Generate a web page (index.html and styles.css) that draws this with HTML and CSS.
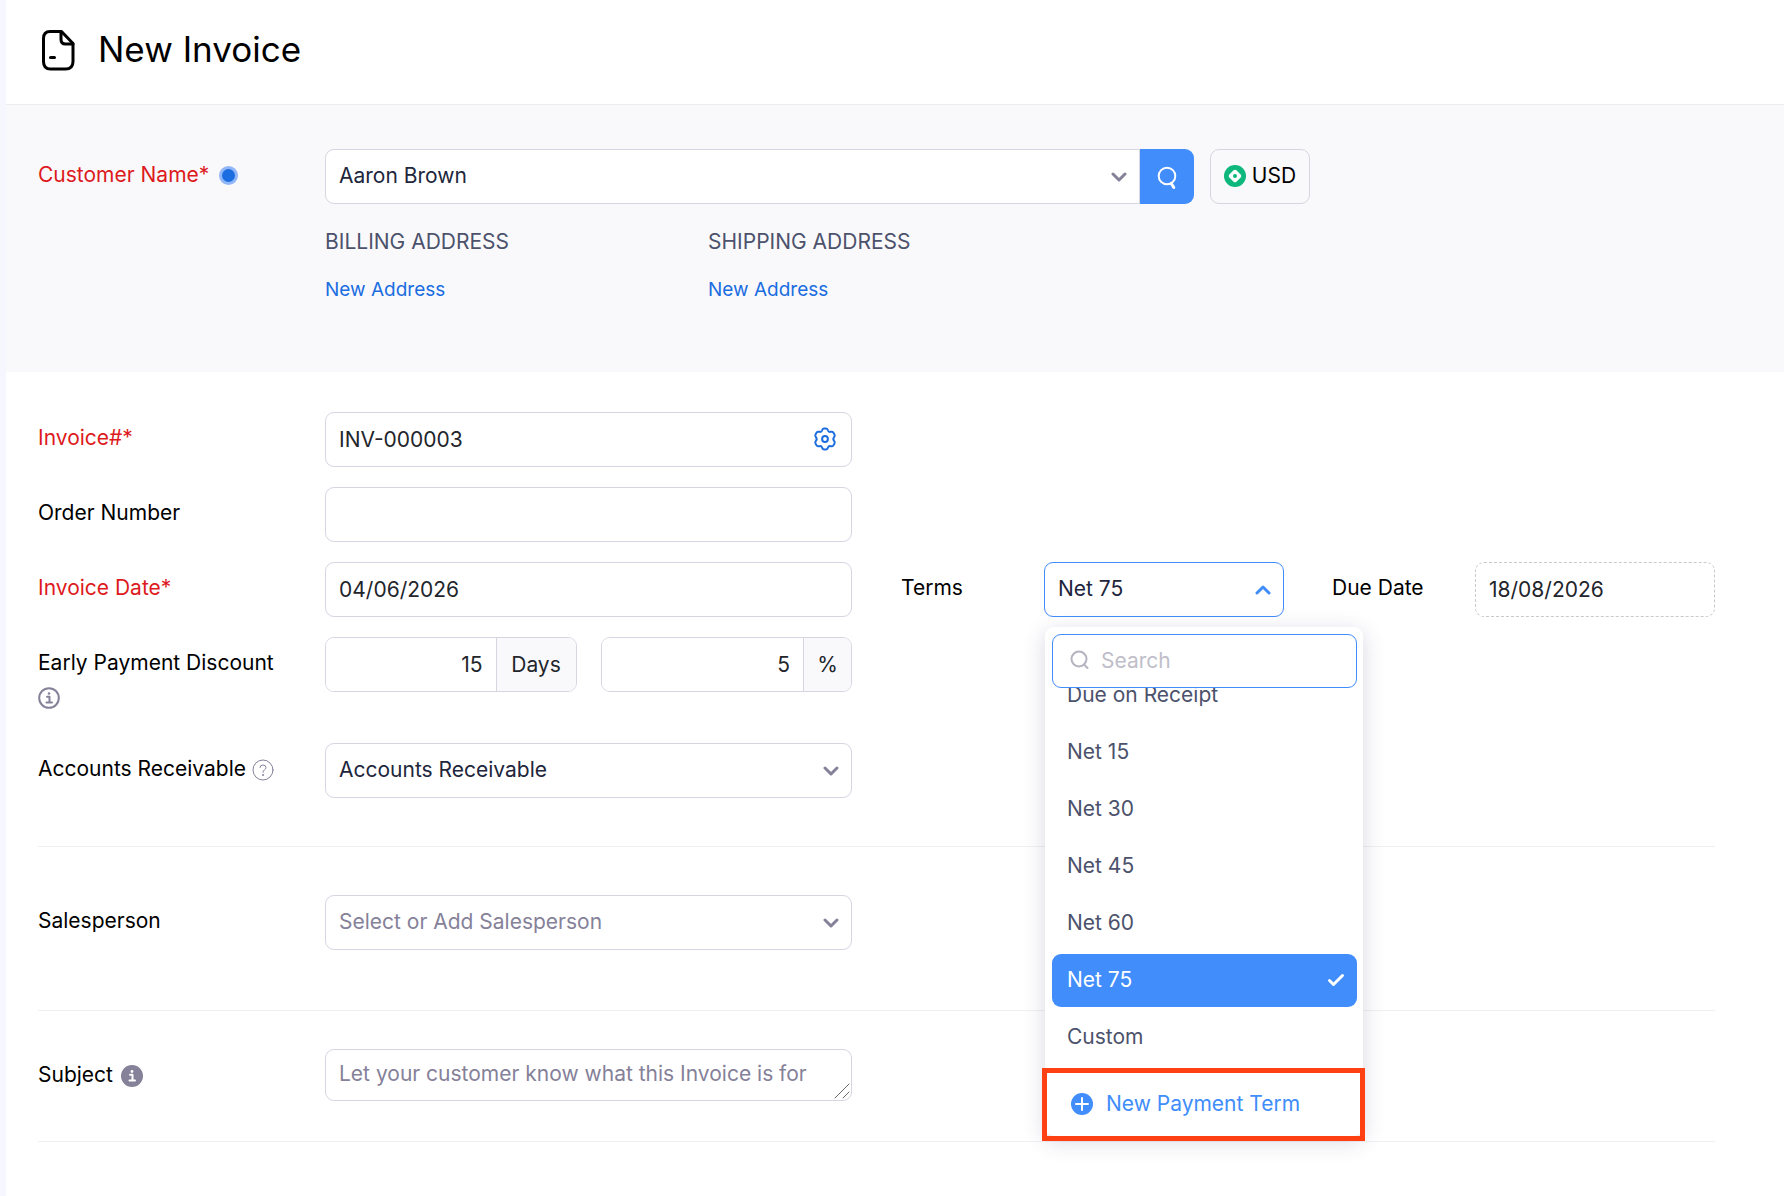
FILE: index.html
```
<!DOCTYPE html>
<html lang="en">
<head>
  <meta charset="utf-8">
  <meta name="viewport" content="width=device-width, initial-scale=1">
  <title>New Invoice</title>
  <link rel="stylesheet" href="styles.css">
</head>
<body>
  <header class="page-header">
    <svg class="header-icon" viewBox="0 0 34 42" aria-hidden="true">
      <path d="M9 2.500h11.500L32 14.500V32.500q0 7.500-7.500 7.500H9.500Q2.500 40 2.500 32.500V9.500Q2.500 2.500 9 2.500z"/>
      <path d="M20 3v7.500q0 4.500 4.500 4.500H32"/>
      <path d="M9.500 28.500h4"/>
    </svg>
    <h1>New Invoice</h1>
  </header>

  <form class="invoice-form">
    <!-- Customer -->
    <section class="customer-section">
      <div class="form-row">
        <label class="field-label required" for="customer">Customer Name* <span class="status-dot"></span></label>
        <div class="customer-fields">
          <div class="input-group">
            <div class="select-wrap">
              <select id="customer">
                <option>Aaron Brown</option>
              </select>
              <svg class="chevron" viewBox="0 0 16 10" aria-hidden="true"><path d="M2 2l6 6 6-6"/></svg>
            </div>
            <button type="button" class="search-button" aria-label="Search customer">
              <svg viewBox="0 0 24 26" aria-hidden="true">
                <circle cx="12" cy="12" r="8.300"/>
                <path class="handle" d="M16.300 19.500l2.500 4"/>
              </svg>
            </button>
          </div>
          <button type="button" class="currency-button">
            <svg viewBox="0 0 22 22" aria-hidden="true">
              <circle cx="11" cy="11" r="11" fill="#0eb77c"/>
              <rect x="6" y="6" width="10" height="10" rx="2" fill="#fff" transform="rotate(45 11 11)"/>
              <circle cx="11" cy="11" r="2" fill="#0eb77c"/>
            </svg>
            USD
          </button>
        </div>
      </div>
      <div class="addresses">
        <div>
          <h2>BILLING ADDRESS</h2>
          <a href="#">New Address</a>
        </div>
        <div>
          <h2>SHIPPING ADDRESS</h2>
          <a href="#">New Address</a>
        </div>
      </div>
    </section>

    <!-- Invoice details -->
    <section class="details">
      <div class="form-row">
        <label class="field-label required" for="invoice-no">Invoice#*</label>
        <div class="input-icon">
          <input type="text" id="invoice-no" value="INV-000003">
          <button type="button" class="gear-button" aria-label="Invoice number settings">
            <svg viewBox="0 0 24 24" aria-hidden="true">
              <path d="M9 3.500Q9.500 1.600 11 1.600h2Q14.500 1.600 15 3.500Q15.600 5.300 17.500 4.800Q19.500 4.300 20.300 5.500L21.500 7.500Q22.200 9 21 10.300Q19.600 12 21 13.700Q22.200 15 21.500 16.500L20.300 18.500Q19.500 19.700 17.500 19.200Q15.600 18.700 15 20.500Q14.500 22.400 13 22.400H11Q9.500 22.400 9 20.500Q8.400 18.700 6.500 19.200Q4.500 19.700 3.700 18.500L2.500 16.500Q1.800 15 3 13.700Q4.400 12 3 10.300Q1.800 9 2.500 7.500L3.700 5.500Q4.500 4.300 6.500 4.800Q8.400 5.300 9 3.500z"/>
              <circle cx="12" cy="12" r="2.900"/>
            </svg>
          </button>
        </div>
      </div>

      <div class="form-row">
        <label class="field-label" for="order-no">Order Number</label>
        <input type="text" id="order-no">
      </div>

      <div class="form-row">
        <label class="field-label required" for="invoice-date">Invoice Date*</label>
        <input type="text" id="invoice-date" value="04/06/2026">
        <label class="field-label terms-label" for="terms">Terms</label>
        <div class="select-wrap terms">
          <select id="terms" class="is-open">
            <option>Net 75</option>
          </select>
          <svg class="chevron open" viewBox="0 0 16 10" aria-hidden="true"><path d="M2 8l6-6 6 6"/></svg>

          <div class="terms-menu">
            <div class="menu-search">
              <svg viewBox="0 0 20 20" aria-hidden="true"><circle cx="9" cy="9" r="7.500"/><path d="M14 14.500l3.500 3.500"/></svg>
              <input type="text" placeholder="Search" aria-label="Search terms">
            </div>
            <ul class="menu-list">
              <li><button type="button">Due on Receipt</button></li>
              <li><button type="button">Net 15</button></li>
              <li><button type="button">Net 30</button></li>
              <li><button type="button">Net 45</button></li>
              <li><button type="button">Net 60</button></li>
              <li>
                <button type="button" class="selected">Net 75
                  <svg viewBox="0 0 18 14" aria-hidden="true"><path d="M2.500 7.500l4 4L15.500 2.500"/></svg>
                </button>
              </li>
              <li><button type="button">Custom</button></li>
            </ul>
            <div class="menu-footer">
              <button type="button">
                <svg viewBox="0 0 22 22" aria-hidden="true"><circle cx="11" cy="11" r="11"/><path d="M11 5v12M5 11h12"/></svg>
                New Payment Term
              </button>
            </div>
          </div>
        </div>
        <label class="field-label due-label" for="due-date">Due Date</label>
        <input type="text" id="due-date" class="due-date" value="18/08/2026" readonly>
      </div>

      <div class="form-row">
        <label class="field-label" for="discount-days">Early Payment Discount
          <svg class="hint-icon" viewBox="0 0 22 22" aria-hidden="true">
            <circle cx="11" cy="11" r="9.800"/>
            <path class="glyph" d="M9 9.700h2.500v5.500M8.500 15.500h5.500"/>
            <circle class="dot" cx="11" cy="6.500" r="1.300"/>
          </svg>
        </label>
        <div class="discount">
          <div class="addon-group">
            <input type="text" id="discount-days" value="15">
            <span class="addon">Days</span>
          </div>
          <div class="addon-group percent">
            <input type="text" value="5" aria-label="Discount percent">
            <span class="addon">%</span>
          </div>
        </div>
      </div>

      <div class="form-row">
        <label class="field-label" for="receivable">Accounts Receivable
          <svg class="hint-icon thin" viewBox="0 0 22 22" aria-hidden="true">
            <circle cx="11" cy="11" r="10"/>
            <path d="M8 8.500Q8 6 11 6t3 2.500Q14 10 12.300 11Q11 11.800 11 13.300"/>
            <circle class="dot" cx="11" cy="16" r="1"/>
          </svg>
        </label>
        <div class="select-wrap">
          <select id="receivable">
            <option>Accounts Receivable</option>
          </select>
          <svg class="chevron" viewBox="0 0 16 10" aria-hidden="true"><path d="M2 2l6 6 6-6"/></svg>
        </div>
      </div>
    </section>

    <section class="salesperson">
      <div class="form-row">
        <label class="field-label" for="salesperson">Salesperson</label>
        <div class="select-wrap">
          <select id="salesperson" class="empty">
            <option>Select or Add Salesperson</option>
          </select>
          <svg class="chevron" viewBox="0 0 16 10" aria-hidden="true"><path d="M2 2l6 6 6-6"/></svg>
        </div>
      </div>
    </section>

    <section class="subject">
      <div class="form-row">
        <label class="field-label" for="subject">Subject
          <svg class="hint-icon filled" viewBox="0 0 22 22" aria-hidden="true">
            <circle cx="11" cy="11" r="11"/>
            <path class="glyph" d="M9 9.700h2.500v5.500M8.500 15.500h5.500"/>
            <circle class="dot" cx="11" cy="6.500" r="1.400"/>
          </svg>
        </label>
        <div class="textarea-wrap">
          <textarea id="subject" rows="1" placeholder="Let your customer know what this Invoice is for"></textarea>
          <svg class="resize-grip" viewBox="0 0 16 16" aria-hidden="true"><path d="M1 15L15 1M9 15l6-6"/></svg>
        </div>
      </div>
    </section>
  </form>
</body>
</html>
```
FILE: styles.css
```
:root {
  --blue: #408dfb;
  --link: #1b6de0;
  --red: #dd1a20;
  --text: #21263c;
  --muted: #4c526c;
  --gray: #858199;
  --border: #d7d5e2;
  --line: #f0f0f3;
  --light-bg: #f9f9fb;
}

* {
  box-sizing: border-box;
}

body {
  margin: 0;
  border-left: 6px solid #f6f6fe;
  background-color: #fff;
  color: #000;
  font-family: Inter, "Liberation Sans", sans-serif;
  font-size: 21px;
  min-height: 100vh;
}

button, input, select, textarea {
  font: inherit;
  color: inherit;
}

button {
  border: none;
  background: none;
  padding: 0;
  cursor: pointer;
}

svg {
  flex: none;
  fill: none;
  stroke-linecap: round;
  stroke-linejoin: round;
}

/* Header */
.page-header {
  display: flex;
  align-items: center;
  gap: 23px;
  height: 105px;
  padding: 0 35px 4px;
  border-bottom: 1px solid #ededf0;
}

.page-header h1 {
  margin: 0;
  padding-bottom: 2px;
  font-size: 35px;
  font-weight: 400;
  line-height: 44px;
}

.header-icon {
  width: 34px;
  height: 42px;
  stroke: #000;
  stroke-width: 3;
}

/* Rows */
.form-row {
  display: grid;
  grid-template-columns: 287px minmax(0, 527fr) 49px 143px minmax(0, 240fr) 48px 143px minmax(0, 240fr);
  align-items: start;
}

.field-label {
  padding: 9px 30px 9px 0;
  line-height: 34px;
}

.required {
  color: var(--red);
}

.terms-label {
  grid-column: 4;
}

.due-label {
  grid-column: 7;
}

.form-row > input,
.input-icon input,
.addon-group,
select {
  width: 100%;
  height: 55px;
  border: 1px solid var(--border);
  border-radius: 9px;
  background-color: #fff;
}

input {
  min-width: 0;
  padding: 0 13px;
  color: #22252b;
  outline: none;
}

select {
  appearance: none;
  padding: 0 40px 2px 13px;
  color: var(--text);
}

select.empty {
  color: var(--gray);
}

select.is-open {
  border-color: var(--blue);
}

.select-wrap {
  position: relative;
  min-width: 0;
}

.chevron {
  position: absolute;
  top: 23px;
  right: 13px;
  width: 16px;
  height: 10px;
  stroke: var(--gray);
  stroke-width: 3;
  pointer-events: none;
}

.chevron.open {
  stroke: var(--blue);
}

/* Customer */
.customer-section {
  padding: 44px 69px 0 32px;
  min-height: 267px;
  background-color: var(--light-bg);
}

.customer-section .form-row {
  grid-template-columns: 287px 1fr;
}

.customer-fields {
  display: grid;
  grid-template-columns: minmax(0, 869fr) 100px minmax(0, 389fr);
  gap: 16px;
}

.status-dot {
  display: inline-block;
  width: 19px;
  height: 19px;
  margin-left: 4px;
  border: 3px solid #92b7f8;
  border-radius: 50%;
  background-color: var(--link);
  vertical-align: -3px;
}

.input-group {
  display: flex;
}

.input-group .select-wrap {
  flex: 1;
}

.input-group select {
  border-radius: 9px 0 0 9px;
}

.search-button {
  display: flex;
  align-items: center;
  justify-content: center;
  width: 54px;
  border-radius: 0 9px 9px 0;
  background-color: var(--blue);
}

.search-button svg {
  width: 24px;
  height: 26px;
  stroke: #fff;
  stroke-width: 2;
}

.search-button .handle {
  stroke-width: 3;
}

.currency-button {
  display: flex;
  align-items: center;
  justify-content: center;
  gap: 6px;
  height: 55px;
  padding-bottom: 2px;
  border: 1px solid var(--border);
  border-radius: 9px;
}

.currency-button svg {
  width: 22px;
  height: 22px;
}

.addresses {
  display: flex;
  padding: 25px 0 0 287px;
}

.addresses div {
  width: 383px;
}

.addresses h2 {
  margin: 0 0 22px;
  color: var(--muted);
  font-size: 21px;
  font-weight: 400;
  line-height: 26px;
}

.addresses a {
  display: block;
  color: var(--link);
  font-size: 19px;
  line-height: 26px;
  text-decoration: none;
}

/* Sections */
.details,
.salesperson,
.subject {
  margin: 0 69px 0 32px;
  border-bottom: 1px solid var(--line);
}

.details {
  display: flex;
  flex-direction: column;
  gap: 20px;
  padding: 40px 0 48px;
}

.salesperson {
  padding: 48px 0 60px;
}

.subject {
  padding: 38px 0 40px;
}

.input-icon {
  position: relative;
}

.gear-button {
  position: absolute;
  top: 15px;
  right: 15px;
  display: flex;
}

.gear-button svg {
  width: 24px;
  height: 24px;
  stroke: var(--link);
  stroke-width: 2;
}

.form-row > .due-date {
  border: 1px dashed #c9c9c9;
}

.hint-icon {
  width: 22px;
  height: 22px;
  stroke: var(--gray);
  stroke-width: 2;
  vertical-align: -5px;
}

.hint-icon .dot {
  fill: var(--gray);
  stroke: none;
}

.hint-icon.thin {
  stroke-width: 1;
}

.hint-icon.filled {
  margin-left: 2px;
  fill: var(--gray);
  stroke: none;
}

.hint-icon.filled .glyph {
  fill: none;
  stroke: #fff;
}

.hint-icon.filled .dot {
  fill: #fff;
}

/* Early payment discount */
.discount {
  display: flex;
  gap: 24px;
}

.addon-group {
  display: flex;
  flex: 1;
  min-width: 0;
  overflow: hidden;
}

.addon-group input {
  flex: 1;
  border: none;
  text-align: right;
}

.addon {
  display: flex;
  align-items: center;
  justify-content: center;
  width: 80px;
  border-left: 1px solid var(--border);
  background-color: var(--light-bg);
  color: #22252b;
}

.percent .addon {
  width: 48px;
}

/* Subject */
.textarea-wrap {
  position: relative;
}

textarea {
  display: block;
  width: 100%;
  height: 52px;
  padding: 11px 13px;
  border: 1px solid var(--border);
  border-radius: 9px;
  line-height: 26px;
  resize: none;
}

textarea::placeholder {
  color: var(--gray);
}

.resize-grip {
  position: absolute;
  right: 2px;
  bottom: 2px;
  width: 16px;
  height: 16px;
  stroke: #666;
  stroke-width: 1;
}

/* Terms menu */
.terms-menu {
  position: absolute;
  top: 65px;
  left: 1px;
  z-index: 10;
  width: 318px;
  padding-top: 7px;
  border-radius: 9px;
  background-color: #fff;
  box-shadow: 0 5px 22px rgba(60, 55, 110, 0.2);
}

.menu-search {
  display: flex;
  align-items: center;
  gap: 11px;
  height: 54px;
  margin: 0 6px 0 7px;
  padding: 0 17px 2px;
  border: 1px solid var(--blue);
  border-radius: 9px;
}

.menu-search svg {
  width: 20px;
  height: 20px;
  stroke: #b5b3c0;
  stroke-width: 2;
}

.menu-search input {
  flex: 1;
  padding: 0;
  border: none;
  background: none;
}

.menu-search input::placeholder {
  color: #c0bec9;
}

.menu-list {
  height: 383px;
  margin: 0;
  padding: 0 6px 0 7px;
  overflow: hidden;
  list-style: none;
}

.menu-list li {
  margin-bottom: 4px;
}

/* list is scrolled so the selected term is in view */
.menu-list li:first-child {
  margin-top: -19px;
}

.menu-list button {
  display: flex;
  align-items: center;
  justify-content: space-between;
  width: 100%;
  height: 53px;
  padding: 0 12px 2px 15px;
  border-radius: 9px;
  color: var(--muted);
}

.menu-list .selected {
  background-color: var(--blue);
  color: #fff;
}

.menu-list svg {
  width: 18px;
  height: 14px;
  stroke: #fff;
  stroke-width: 3;
}

.menu-footer {
  position: relative;
  display: flex;
  align-items: center;
  height: 65px;
  padding-left: 26px;
}

.menu-footer::after {
  content: "";
  position: absolute;
  inset: -3px -2px -5px -3px;
  border: 5px solid #ff4013;
  pointer-events: none;
}

.menu-footer button {
  display: flex;
  align-items: center;
  gap: 13px;
  color: var(--blue);
}

.menu-footer svg {
  width: 22px;
  height: 22px;
  fill: var(--blue);
}

.menu-footer path {
  stroke: #fff;
  stroke-width: 2;
}
```
